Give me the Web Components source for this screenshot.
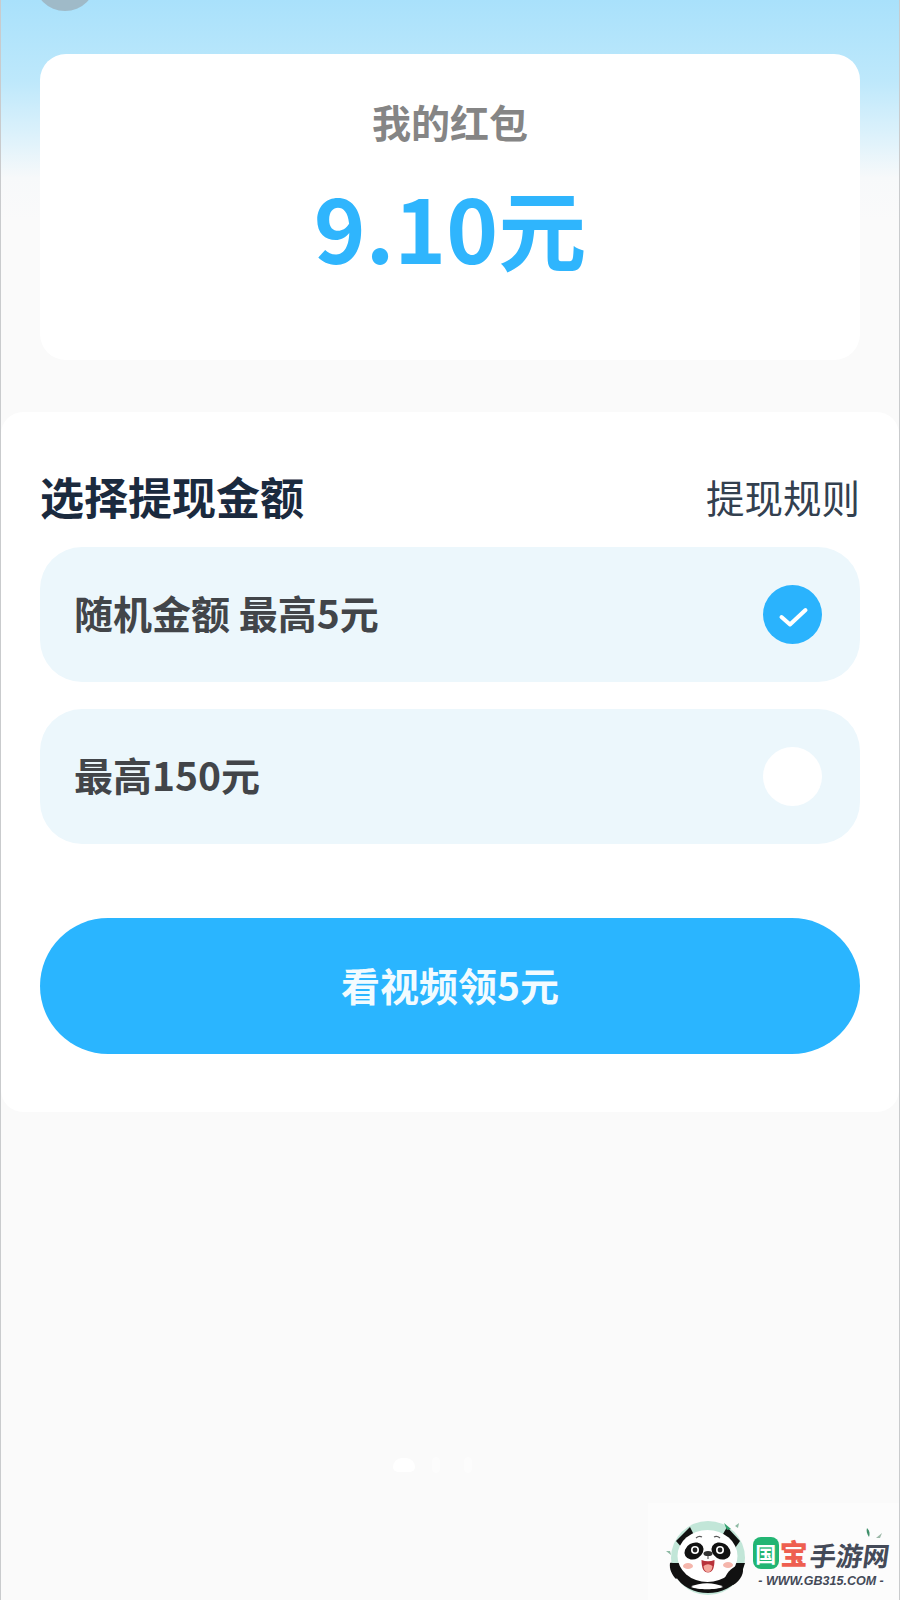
<!DOCTYPE html>
<html lang="zh">
<head>
<meta charset="utf-8">
<title>我的红包</title>
<style>
  html, body { margin: 0; padding: 0; background: #fafafa; }
  body { font-family: "Noto Sans CJK SC", "Noto Sans", sans-serif; }
</style>
</head>
<body>
<wallet-page>
  <balance-card label="我的红包" amount="9.10元"></balance-card>
  <withdraw-sheet>
    <sheet-header title="选择提现金额" link="提现规则"></sheet-header>
    <amount-option selected="true">随机金额 最高5元</amount-option>
    <amount-option>最高150元</amount-option>
    <action-button>看视频领5元</action-button>
  </withdraw-sheet>
  <page-dots></page-dots>
  <site-logo></site-logo>
</wallet-page>

<script>
class WalletPage extends HTMLElement {
  constructor() {
    super();
    this.attachShadow({ mode: 'open' });
    this.shadowRoot.innerHTML = `
      <style>
        :host {
          display: block;
          position: relative;
          box-sizing: border-box;
          width: 900px;
          height: 1600px;
          overflow: hidden;
          padding-top: 54px;
          border-left: 1px solid #c9cbcd;
          border-right: 1px solid #c9cbcd;
          background: linear-gradient(180deg, #a9e1fb 0, #bde8fb 80px, #e2f3fb 145px, #f7f9fa 178px, #fafafa 220px);
        }
        .avatar {
          position: absolute;
          left: 33px;
          top: -51px;
          width: 62px;
          height: 62px;
          border-radius: 50%;
          background: #9fbac8;
        }
      </style>
      <div class="avatar"></div>
      <slot></slot>
    `;
  }
}

class BalanceCard extends HTMLElement {
  constructor() {
    super();
    this.attachShadow({ mode: 'open' });
  }

  connectedCallback() {
    this.shadowRoot.innerHTML = `
      <style>
        :host {
          display: flex;
          flex-direction: column;
          align-items: center;
          box-sizing: border-box;
          height: 306px;
          margin: 0 39px;
          padding-top: 40px;
          background: #fff;
          border-radius: 26px;
        }
        .label {
          font-size: 39px;
          line-height: 54px;
          font-weight: 700;
          color: #858585;
        }
        .amount {
          margin-top: 23px;
          font-size: 88px;
          line-height: 110px;
          font-weight: 700;
          color: #2fb5fd;
        }
      </style>
      <div class="label">${this.getAttribute('label')}</div>
      <div class="amount">${this.getAttribute('amount')}</div>
    `;
  }
}

class WithdrawSheet extends HTMLElement {
  constructor() {
    super();
    this.attachShadow({ mode: 'open' });
    this.shadowRoot.innerHTML = `
      <style>
        :host {
          display: flex;
          flex-direction: column;
          box-sizing: border-box;
          height: 700px;
          margin-top: 52px;
          padding: 56px 39px 0;
          background: #fff;
          border-radius: 22px;
        }
      </style>
      <slot></slot>
    `;
  }
}

class SheetHeader extends HTMLElement {
  constructor() {
    super();
    this.attachShadow({ mode: 'open' });
  }

  connectedCallback() {
    this.shadowRoot.innerHTML = `
      <style>
        :host {
          display: flex;
          justify-content: space-between;
          align-items: center;
          height: 56px;
          margin-bottom: 23px;
        }
        .title {
          font-size: 44px;
          line-height: 56px;
          font-weight: 700;
          color: #1b2a3e;
        }
        .link {
          font-size: 38.5px;
          line-height: 56px;
          font-weight: 400;
          color: #33404f;
        }
      </style>
      <span class="title">${this.getAttribute('title')}</span>
      <span class="link">${this.getAttribute('link')}</span>
    `;
  }
}

class AmountOption extends HTMLElement {
  static get observedAttributes() {
    return ['selected'];
  }

  constructor() {
    super();
    this.attachShadow({ mode: 'open' });
  }

  connectedCallback() {
    this.render();
  }

  attributeChangedCallback() {
    this.render();
  }

  render() {
    const selected = this.getAttribute('selected') === 'true';
    this.shadowRoot.innerHTML = `
      <style>
        :host {
          display: flex;
          align-items: center;
          justify-content: space-between;
          box-sizing: border-box;
          height: 135px;
          margin-bottom: 27px;
          padding: 0 38px 0 34px;
          background: #ecf7fc;
          border-radius: 42px;
        }
        .text {
          padding-bottom: 5px;
          font-size: 39px;
          line-height: 50px;
          font-weight: 700;
          color: #424549;
        }
        .mark {
          display: block;
          width: 59px;
          height: 59px;
          border-radius: 50%;
          background: #fff;
        }
        .mark.on { background: #2ab3fd; }
      </style>
      <span class="text"><slot></slot></span>
      <span class="mark ${selected ? 'on' : ''}">
        ${selected ? `<svg width="59" height="59" viewBox="0 0 59 59" fill="none">
          <path d="M18.5 32 L27 39.5 L42.5 25" stroke="#fff" stroke-width="4" stroke-linecap="round" stroke-linejoin="round"/>
        </svg>` : ''}
      </span>
    `;
  }
}

class ActionButton extends HTMLElement {
  constructor() {
    super();
    this.attachShadow({ mode: 'open' });
    this.shadowRoot.innerHTML = `
      <style>
        :host {
          display: flex;
          align-items: center;
          justify-content: center;
          box-sizing: border-box;
          height: 136px;
          margin-top: 47px;
          padding-bottom: 4px;
          background: #2ab5ff;
          border-radius: 68px;
          font-size: 39px;
          font-weight: 700;
          color: #f2fbff;
          cursor: pointer;
        }
      </style>
      <slot></slot>
    `;
  }
}

class PageDots extends HTMLElement {
  constructor() {
    super();
    this.attachShadow({ mode: 'open' });
    this.shadowRoot.innerHTML = `
      <style>
        :host {
          position: absolute;
          left: 392px;
          top: 1456px;
          display: flex;
          align-items: center;
          gap: 17px;
          height: 18px;
        }
        .dot { width: 8px; height: 16px; background: #fcfcfc; border-radius: 4px; }
        .dot:last-child { margin-left: 7px; }
        .dot.active { width: 22px; height: 14px; background: #fff; border-radius: 9px 9px 5px 5px; }
      </style>
      <div class="dot active"></div>
      <div class="dot"></div>
      <div class="dot"></div>
    `;
  }
}

class SiteLogo extends HTMLElement {
  constructor() {
    super();
    this.attachShadow({ mode: 'open' });
    this.shadowRoot.innerHTML = `
      <style>
        :host {
          position: absolute;
          right: 0;
          bottom: 0;
          box-sizing: border-box;
          display: flex;
          align-items: flex-start;
          width: 251px;
          height: 97px;
          padding: 12px 0 0 11px;
          background: #fcfcfc;
        }
        .panda { flex: none; width: 92px; height: 85px; }
        .words {
          position: relative;
          flex: none;
          display: flex;
          flex-direction: column;
          align-items: center;
          width: 136px;
          margin-left: 2px;
          padding-top: 22px;
        }
        .leaf { position: absolute; left: 110px; top: 13px; }
        .name { display: flex; align-items: center; height: 32px; white-space: nowrap; }
        .guo {
          display: flex;
          align-items: center;
          justify-content: center;
          width: 26px;
          height: 32px;
          border-radius: 8px;
          background: #22b573;
          color: #fff;
          font-size: 21px;
          font-weight: 700;
          line-height: 1;
        }
        .bao { font-size: 28px; font-weight: 900; color: #ee5f50; line-height: 32px; margin-left: 1px; }
        .rest {
          display: inline-block;
          transform: skewX(-8deg);
          font-size: 26.5px;
          font-weight: 700;
          color: #444a58;
          line-height: 32px;
          margin: 4px 0 0 2px;
        }
        .url {
          font-family: "Liberation Sans", sans-serif;
          font-size: 12.5px;
          font-weight: 700;
          font-style: italic;
          color: #444a58;
          line-height: 14px;
          margin-top: 5px;
          white-space: nowrap;
        }
      </style>
      <svg class="panda" viewBox="0 0 92 85">
        <circle cx="49" cy="43" r="37" fill="#c2e6d8"/>
        <path d="M12 48 L16 60 C22 72 36 78 49 78 C62 78 76 72 82 60 L86 48 Z" fill="#111"/>
        <path d="M17 26 L31 12 L38 26 L24 34 Z" fill="#111"/>
        <path d="M81 26 L68 12 L60 26 L74 36 Z" fill="#111"/>
        <ellipse cx="48.5" cy="41" rx="30" ry="26" fill="#fff"/>
        <path d="M32 72 C40 67 56 67 64 72 C58 75 38 75 32 72 Z" fill="#fff"/>
        <ellipse cx="35" cy="36" rx="10" ry="8" transform="rotate(-30 35 36)" fill="#111"/>
        <ellipse cx="62" cy="36" rx="10" ry="8" transform="rotate(30 62 36)" fill="#111"/>
        <circle cx="36" cy="35" r="4" fill="#fff"/>
        <circle cx="61" cy="35" r="4" fill="#fff"/>
        <circle cx="36" cy="35" r="2.4" fill="#222"/>
        <circle cx="61" cy="35" r="2.4" fill="#222"/>
        <path d="M37 23 Q40 20.5 43 22" stroke="#555" stroke-width="1.2" fill="none"/>
        <path d="M55 22 Q58 20.5 61 23" stroke="#555" stroke-width="1.2" fill="none"/>
        <ellipse cx="49" cy="38.5" rx="4.5" ry="2.6" fill="#333"/>
        <path d="M49 41 L49 44" stroke="#444" stroke-width="1"/>
        <path d="M42.5 45 Q49 47.5 55.5 45 Q55.5 57.5 49 57.5 Q42.5 57.5 42.5 45 Z" fill="#b8323a"/>
        <path d="M44.5 51 Q49 47.5 53.5 51 Q53 57 49 57 Q45 57 44.5 51 Z" fill="#f4a79c"/>
        <ellipse cx="29" cy="51" rx="5" ry="3" fill="#f5b6ac"/>
        <ellipse cx="69" cy="50" rx="5" ry="3" fill="#f5b6ac"/>
        <path d="M66 63 C69 55 78 48 83 52 C86 56 82 66 74 70 Z" fill="#111"/>
        <path d="M11 48 C16 47 20 52 22 60 L17 64 C13 60 10 54 11 48 Z" fill="#111"/>
        <path d="M65 8 L72 14 L68 15 Z" fill="#2f9e6b"/>
        <path d="M76 11 L80 8 L79 13 Z" fill="#8db9a3"/>
        <path d="M7 36 L12 40 L11 36 Z" fill="#8db9a3"/>
      </svg>
      <div class="words">
        <svg class="leaf" width="22" height="12" viewBox="0 0 22 12">
          <path d="M4 0 C7 3 7 6 6 9 C4 6 3 3 4 0 Z" fill="#3f8f6a"/>
          <path d="M13 10 L19 5 L17 10 Z" fill="#9cb8a8"/>
        </svg>
        <div class="name">
          <span class="guo">国</span><span class="bao">宝</span><span class="rest">手游网</span>
        </div>
        <div class="url">- WWW.GB315.COM -</div>
      </div>
    `;
  }
}

customElements.define('wallet-page', WalletPage);
customElements.define('balance-card', BalanceCard);
customElements.define('withdraw-sheet', WithdrawSheet);
customElements.define('sheet-header', SheetHeader);
customElements.define('amount-option', AmountOption);
customElements.define('action-button', ActionButton);
customElements.define('page-dots', PageDots);
customElements.define('site-logo', SiteLogo);
</script>
</body>
</html>
